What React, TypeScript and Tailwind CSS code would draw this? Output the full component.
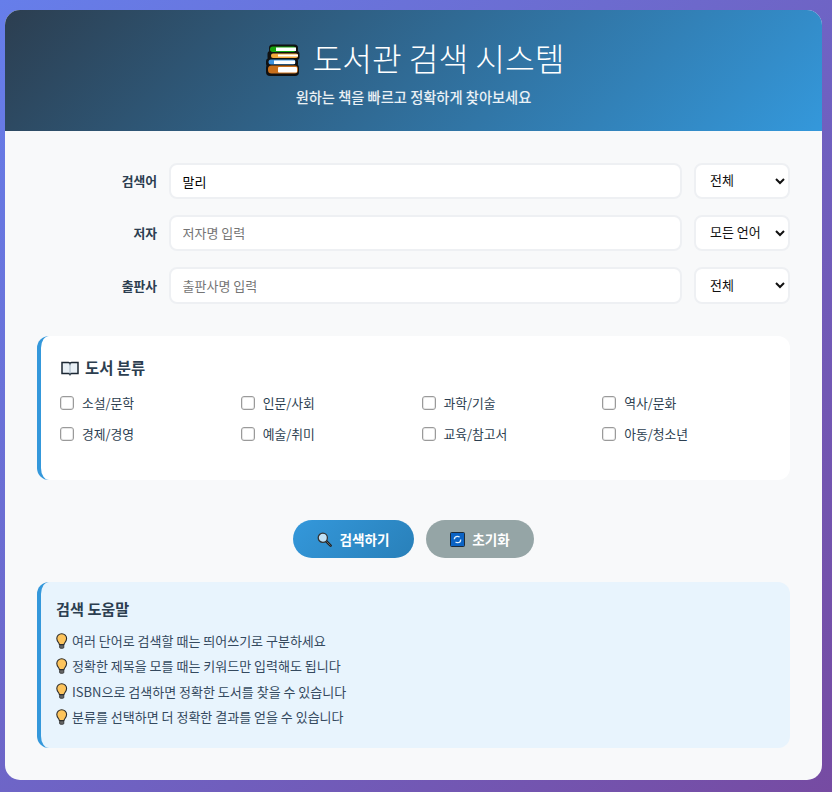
import React from "react";

const font = { fontFamily: '"Noto Sans CJK KR", "Noto Sans", sans-serif' };

function BooksIcon() {
  return (
    <svg width="34" height="32" viewBox="0 0 34 32" className="mt-[5px] shrink-0">
      <rect x="3" y="0.500" width="29" height="9" rx="3.500" fill="#111" />
      <rect x="1.500" y="7" width="32" height="9" rx="3" fill="#111" />
      <rect x="0" y="14" width="32" height="9" rx="3.500" fill="#111" />
      <rect x="0" y="20" width="33" height="12" rx="4" fill="#111" />
      <rect x="4" y="2.500" width="26" height="5.500" rx="2.700" fill="#17a30f" />
      <rect x="10" y="3.500" width="20" height="3.500" fill="#fff" />
      <rect x="5" y="9.500" width="27" height="4.500" rx="2" fill="#f4a93c" />
      <rect x="12" y="10.500" width="20" height="2" fill="#fff" />
      <rect x="2.500" y="15.500" width="27" height="5" rx="2.500" fill="#3b92e0" />
      <rect x="8" y="16.500" width="21" height="3.500" fill="#fff" />
      <rect x="2" y="21.500" width="30" height="8" rx="3.500" fill="#c9701c" />
      <rect x="12" y="23" width="19" height="5.500" rx="1" fill="#fff" />
    </svg>
  );
}

function OpenBookIcon() {
  return (
    <svg width="18" height="16" viewBox="0 0 18 16" className="shrink-0">
      <path d="M1 2.500h6.500c.8 0 1.300.4 1.500 1 .2-.6.7-1 1.500-1H17v11h-6.500c-.7 0-1.200.3-1.500.9-.3-.6-.8-.9-1.500-.9H1z" fill="#e9f0f6" stroke="#1c2733" strokeWidth="1.500" />
      <path d="M9 3.500v11" stroke="#8fa3b5" strokeWidth="0.800" />
    </svg>
  );
}

function SearchIcon() {
  return (
    <svg width="15" height="15" viewBox="0 0 15 15" className="shrink-0">
      <path d="M9 9l4.600 4.600" stroke="#222" strokeWidth="2.600" strokeLinecap="round" />
      <path d="M9.500 9.500l3.800 3.800" stroke="#777" strokeWidth="0.800" strokeLinecap="round" />
      <circle cx="5.800" cy="5.800" r="4.600" fill="#bfe0f5" stroke="#333" strokeWidth="1.300" />
    </svg>
  );
}

function RefreshIcon() {
  return (
    <svg width="15" height="15" viewBox="0 0 15 15" className="shrink-0">
      <rect x="0.500" y="0.500" width="14" height="14" rx="1" fill="#0b63c4" stroke="#1c2b3a" />
      <circle cx="7.500" cy="7.500" r="3.200" fill="none" stroke="#e4f1fb" strokeWidth="1.300" strokeDasharray="7 3" />
    </svg>
  );
}

function BulbIcon() {
  return (
    <svg width="12" height="16" viewBox="0 0 12 16" className="shrink-0">
      <path d="M5.700 0.800C2.900 0.800 0.800 2.900 0.800 5.600c0 1.900 1 3.100 1.800 4.200.5.700.7 1.200.8 1.800h4.600c.1-.6.300-1.100.8-1.800.8-1.100 1.800-2.300 1.800-4.200C10.600 2.900 8.500 0.800 5.700 0.800z" fill="#fdc45c" stroke="#2b2b2b" strokeWidth="1.100" />
      <rect x="3.600" y="11.800" width="4.200" height="3.500" rx="1" fill="#666" stroke="#2b2b2b" strokeWidth="0.800" />
    </svg>
  );
}

function Row({ label, placeholder, value, options, tall }: { label: string; placeholder?: string; value?: string; options: string; tall?: boolean }) {
  return (
    <div className="flex items-center gap-3">
      <label className="w-[120px] text-right text-[12.8px] font-bold text-[#2c3e50]">{label}</label>
      <input
        readOnly
        defaultValue={value}
        placeholder={placeholder}
        className={`${tall ? "h-[37px]" : "h-[36px]"} ${value ? "pt-[1px]" : "pb-[1px]"} flex-1 rounded-lg border-2 border-[#eef0f3] bg-white pl-[11.500px] pr-3 text-[13px] text-black placeholder:text-[#757575] outline-none`}
      />
      <select className={`${tall ? "h-[37px]" : "h-[36px]"} w-[96px] rounded-lg border-2 border-[#eef0f3] bg-white pb-[3px] pl-[10px] pr-[11px] text-[13px] font-normal text-[#111] outline-none`}>
        <option>{options}</option>
      </select>
    </div>
  );
}

const categories = ["소설/문학", "인문/사회", "과학/기술", "역사/문화", "경제/경영", "예술/취미", "교육/참고서", "아동/청소년"];
const tips = [
  "여러 단어로 검색할 때는 띄어쓰기로 구분하세요",
  "정확한 제목을 모를 때는 키워드만 입력해도 됩니다",
  "ISBN으로 검색하면 정확한 도서를 찾을 수 있습니다",
  "분류를 선택하면 더 정확한 결과를 얻을 수 있습니다",
];

export default function App() {
  return (
    <div style={font} className="h-[792px] w-[832px] overflow-hidden bg-[linear-gradient(135deg,#667eea_0%,#764ba2_100%)] pl-[5px] pt-[10px]">
      <div className="h-[770px] w-[817px] overflow-hidden rounded-[15px] bg-[#f8f9fa]">
        <header className="flex h-[121px] flex-col items-center bg-[linear-gradient(135deg,#2c3e50_0%,#3498db_100%)] pt-[25px] text-white">
          <h1 className="flex h-[44px] items-center gap-[13px] pl-[3px] text-[32.3px] font-light leading-none">
            <BooksIcon />
            도서관 검색 시스템
          </h1>
          <p className="mt-[8px] text-[14.25px] font-medium leading-[20px] text-white/90">원하는 책을 빠르고 정확하게 찾아보세요</p>
        </header>
        <main className="flex flex-col px-8 pt-8">
          <div className="flex flex-col gap-4">
            <Row label="검색어" value="말리" options="전체" />
            <Row label="저자" placeholder="저자명 입력" options="모든 언어" />
            <Row label="출판사" placeholder="출판사명 입력" options="전체" tall />
          </div>
          <section className="mt-8 h-[144px] rounded-xl border-l-4 border-[#3498db] bg-white pl-[19px] pr-5 pt-[21px]">
            <h3 className="ml-[1px] flex h-[22px] items-center gap-[6px] text-[15.4px] font-bold text-[#2c3e50]">
              <OpenBookIcon />
              도서 분류
            </h3>
            <div className="mt-[14px] grid grid-cols-4 gap-x-[13px] gap-y-[11px]">
              {categories.map((c) => (
                <label key={c} className="flex h-[20px] items-center gap-[8px] text-[12.8px] text-[#2c3e50]">
                  <input type="checkbox" className="m-0 h-[14px] w-[14px] appearance-none rounded-[3px] border border-[#9a9a9a] bg-white shadow-[inset_0_0_0_1px_#e6e6e6]" />
                  {c}
                </label>
              ))}
            </div>
          </section>
          <div className="mt-10 flex justify-center gap-3">
            <button className="flex h-[38px] w-[121px] items-center justify-center gap-[7px] rounded-full bg-[linear-gradient(135deg,#3498db_0%,#2980b9_100%)] text-[13.6px] font-bold text-white">
              <SearchIcon />
              검색하기
            </button>
            <button className="flex h-[38px] w-[108px] items-center justify-center gap-[7px] rounded-full bg-[#95a5a6] text-[13.6px] font-bold text-white">
              <RefreshIcon />
              초기화
            </button>
          </div>
          <section className="mt-6 h-[166px] rounded-xl border-l-4 border-[#3498db] bg-[#e8f4fd] pl-[15px] pt-[14px]">
            <h4 className="text-[15.2px] font-bold leading-[24px] text-[#2c3e50]">검색 도움말</h4>
            <ul className="mt-[10.500px] flex flex-col gap-[5.400px]">
              {tips.map((t) => (
                <li key={t} className="flex h-[20px] items-center gap-[4px] text-[13px] text-[#34495e]">
                  <BulbIcon />
                  {t}
                </li>
              ))}
            </ul>
          </section>
        </main>
      </div>
    </div>
  );
}
